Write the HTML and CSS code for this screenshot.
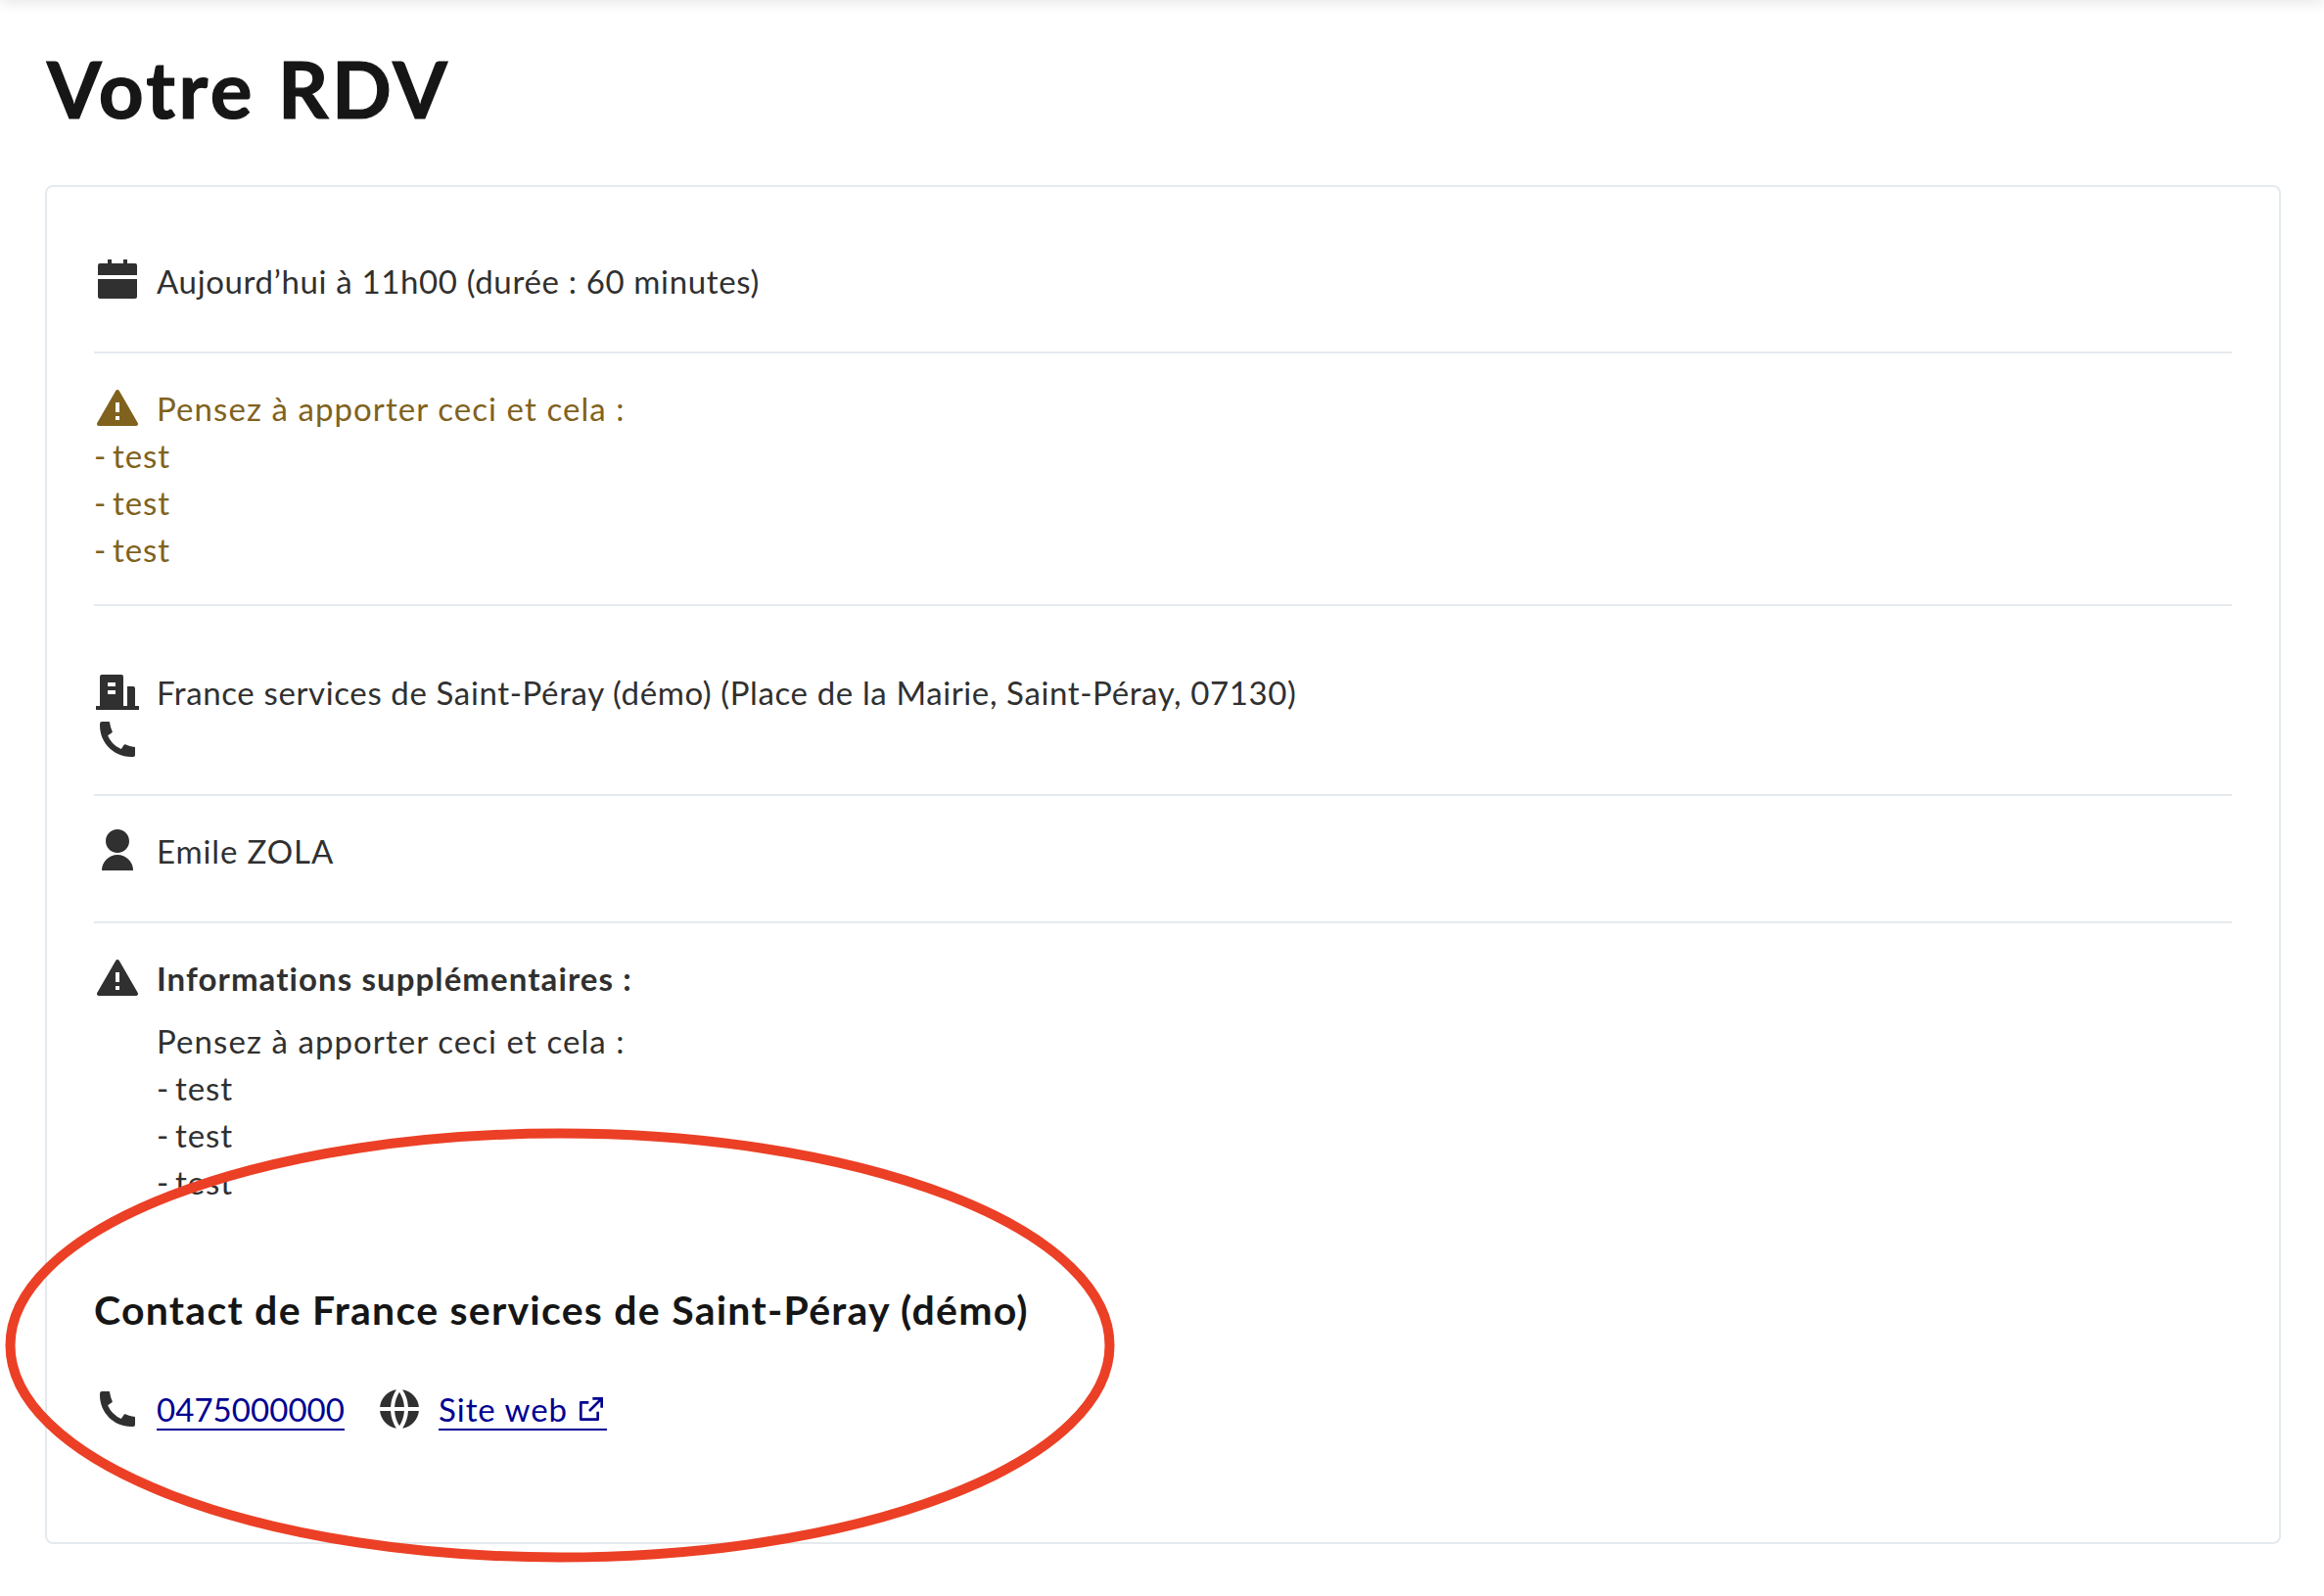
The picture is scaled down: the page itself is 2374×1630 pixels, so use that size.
FILE: index.html
```html
<!DOCTYPE html>
<html lang="fr">
<head>
<meta charset="utf-8">
<title>Votre RDV</title>
<link rel="stylesheet" href="styles.css">
</head>
<body>
<svg class="sprite" aria-hidden="true">
  <symbol id="calendar" viewBox="0 0 24 24"><path d="M17 3h4a1 1 0 0 1 1 1v5H2V4a1 1 0 0 1 1-1h4V1h2v2h6V1h2v2zm5 8v9a1 1 0 0 1-1 1H3a1 1 0 0 1-1-1v-9h20z"/></symbol>
  <symbol id="alert" viewBox="0 0 24 24"><path fill-rule="evenodd" d="M12.866 3l9.526 16.5a1 1 0 0 1-.866 1.5H2.474a1 1 0 0 1-.866-1.5L11.134 3a1 1 0 0 1 1.732 0zM11 16v2h2v-2h-2zm0-7v5h2V9h-2z"/></symbol>
  <symbol id="building" viewBox="0 0 24 24"><path fill-rule="evenodd" d="M21 19h2v2H1v-2h2V4a1 1 0 0 1 1-1h10a1 1 0 0 1 1 1v15h2V9h3a1 1 0 0 1 1 1v9zM7 11v2h4v-2H7zm0-4v2h4V7H7z"/></symbol>
  <symbol id="phone" viewBox="0 0 24 24"><path d="M21 16.42v3.536a1 1 0 0 1-.93.998c-.437.03-.794.046-1.07.046-8.837 0-16-7.163-16-16 0-.276.015-.633.046-1.07A1 1 0 0 1 4.044 3H7.58a.5.5 0 0 1 .498.45c.023.23.044.413.064.552A13.901 13.901 0 0 0 9.35 8.003c.095.2.033.439-.147.567l-2.158 1.542a13.047 13.047 0 0 0 6.844 6.844l1.54-2.154a.462.462 0 0 1 .573-.149 13.901 13.901 0 0 0 4 1.205c.139.02.322.042.55.064a.5.5 0 0 1 .449.498z"/></symbol>
  <symbol id="user" viewBox="0 0 24 24"><path d="M4 22a8 8 0 1 1 16 0H4zm8-9c-3.315 0-6-2.685-6-6s2.685-6 6-6 6 2.685 6 6-2.685 6-6 6z"/></symbol>
  <symbol id="globe" viewBox="0 0 24 24"><path d="M2.05 13h5.477a17.9 17.9 0 0 0 2.925 8.88A10.005 10.005 0 0 1 2.05 13zm0-2a10.005 10.005 0 0 1 8.402-8.88A17.9 17.9 0 0 0 7.527 11H2.05zm19.9 0h-5.477a17.9 17.9 0 0 0-2.925-8.88A10.005 10.005 0 0 1 21.95 11zm0 2a10.005 10.005 0 0 1-8.402 8.88A17.9 17.9 0 0 0 16.473 13h5.478zM9.53 13h4.94A15.908 15.908 0 0 1 12 20.592 15.908 15.908 0 0 1 9.53 13zm0-2A15.908 15.908 0 0 1 12 3.408 15.908 15.908 0 0 1 14.47 11H9.53z"/></symbol>
  <symbol id="external" viewBox="0 0 24 24"><path d="M10 6v2H5v11h11v-5h2v6a1 1 0 0 1-1 1H4a1 1 0 0 1-1-1V7a1 1 0 0 1 1-1h6zm11-3v8h-2V6.413l-7.793 7.794-1.414-1.414L17.585 5H13V3h8z"/></symbol>
</svg>
<header class="topbar"></header>
<main class="page">
  <h1 class="title">Votre RDV</h1>
  <section class="card">
    <div class="block block-date">
      <div class="row"><svg class="icon"><use href="#calendar"/></svg><span class="date">Aujourd’hui à 11h00 (durée : 60 minutes)</span></div>
    </div>
    <div class="block block-warning">
      <div class="row"><svg class="icon"><use href="#alert"/></svg><span class="notice">Pensez à apporter ceci et cela :</span></div>
      <div class="item">- test</div>
      <div class="item">- test</div>
      <div class="item">- test</div>
    </div>
    <div class="block block-place">
      <div class="row"><svg class="icon"><use href="#building"/></svg><span class="place">France services de Saint-Péray (démo) (Place de la Mairie, Saint-Péray, 07130)</span></div>
      <div class="row"><svg class="icon"><use href="#phone"/></svg></div>
    </div>
    <div class="block block-user">
      <div class="row"><svg class="icon"><use href="#user"/></svg><span class="user">Emile ZOLA</span></div>
    </div>
    <div class="block block-info">
      <div class="row"><svg class="icon"><use href="#alert"/></svg><strong class="info-title">Informations supplémentaires :</strong></div>
      <div class="info-body">
        <div class="notice">Pensez à apporter ceci et cela :</div>
        <div class="item">- test</div>
        <div class="item">- test</div>
        <div class="item">- test</div>
      </div>
    </div>
    <h2 class="contact-title">Contact de France services de Saint-Péray (démo)</h2>
    <div class="contacts">
      <div class="row"><svg class="icon"><use href="#phone"/></svg><a class="link tel" href="tel:0475000000">0475000000</a></div>
      <div class="row"><svg class="icon"><use href="#globe"/></svg><a class="link site" href="#">Site web<svg class="icon-ext"><use href="#external"/></svg></a></div>
    </div>
  </section>
</main>
<svg class="highlight" viewBox="0 0 1134 444" aria-hidden="true"><ellipse cx="567" cy="222" rx="561.5" ry="216.5"/></svg>
</body>
</html>
```
FILE: styles.css
```css
* { box-sizing: border-box; }

body {
  margin: 0;
  height: 1630px;
  overflow: hidden;
  background: #fff;
  color: #303030;
  font: 400 33px/48px Lato, "Open Sans", sans-serif;
}

.sprite { display: none; }

.topbar {
  height: 10px;
  margin-top: -10px;
  box-shadow: 0 0 16px rgba(0, 0, 0, .16);
  clip-path: inset(0 0 -20px 0);
}

.page { padding: 42px 44px 0 46px; }

.title {
  margin: 0 0 51px;
  padding-left: 2px;
  color: #161616;
  font-size: 80px;
  line-height: 96px;
  letter-spacing: 3.5px;
  -webkit-text-stroke: 1.2px #161616;
}

.card {
  height: 1388px;
  padding: 24px 48px 0;
  border: 2px solid #e4eaee;
  border-radius: 8px;
}

.block { border-bottom: 2px solid #e4eaee; }
.block-date { padding: 48px 0; }
.block-warning { padding: 32px 0; color: #80621e; }
.block-place { padding: 64px 0 32px; }
.block-user { padding: 32px 0 48px; }
.block-info { padding-top: 32px; border: 0; }

.row {
  display: flex;
  gap: 16px;
  height: 48px;
}

.icon {
  flex: none;
  width: 48px;
  height: 48px;
  fill: currentColor;
}

.date { letter-spacing: .65px; }
.notice { letter-spacing: 1.08px; }
.item { letter-spacing: .9px; word-spacing: -3.5px; }
.place { letter-spacing: .62px; }
.user { letter-spacing: .88px; }
.info-title { letter-spacing: 1.08px; }

.info-body { padding: 16px 0 0 64px; }

.contact-title {
  margin: 79px 0 49px;
  color: #161616;
  font-size: 41px;
  line-height: 56px;
  letter-spacing: 1.25px;
}

.contacts { display: flex; gap: 32px; }

.link {
  display: flex;
  height: 46px;
  border-bottom: 2px solid #000091;
  color: #000091;
  text-decoration: none;
}
.tel { width: 192px; letter-spacing: .06px; }
.site { width: 172px; justify-content: space-between; letter-spacing: .98px; }

.icon-ext {
  width: 32px;
  height: 32px;
  margin-top: 8px;
  fill: currentColor;
}

.highlight {
  position: absolute;
  left: 5px;
  top: 1152px;
  width: 1134px;
  height: 444px;
  fill: none;
  stroke: #eb4026;
  stroke-width: 10px;
}
```
